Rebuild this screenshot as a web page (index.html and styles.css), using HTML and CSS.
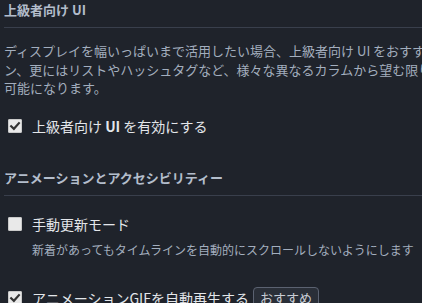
FILE: index.html
```html
<!DOCTYPE html>
<html lang="ja">
<head>
<meta charset="utf-8">
<link rel="stylesheet" href="styles.css">
</head>
<body>
<div class="page">
  <section class="group">
    <h4 class="group-title">上級者向け UI</h4>
    <p class="group-desc"><span class="line">ディスプレイを幅いっぱいまで活用したい場合、上級者向け UI をおすすめします。ホーム、通知、連合タイムライ</span><span class="line">ン、更にはリストやハッシュタグなど、様々な異なるカラムから望む限りの情報を一度に見たいように設定することが</span><span class="line">可能になります。</span></p>
    <label class="check-row">
      <span class="box checked"><svg viewBox="0 0 14 14" width="14" height="14"><path d="M3.2 7.2 L5.9 9.8 L10.9 4.2" fill="none" stroke="#333" stroke-width="2.2" stroke-linecap="square"/></svg></span>
      <span class="check-label">上級者向け <b>UI</b> を有効にする</span>
    </label>
  </section>
  <section class="group second">
    <h4 class="group-title">アニメーションとアクセシビリティー</h4>
    <label class="check-row first">
      <span class="box"></span>
      <span class="check-label">手動更新モード</span>
    </label>
    <p class="hint">新着があってもタイムラインを自動的にスクロールしないようにします</p>
    <label class="check-row third">
      <span class="box checked"><svg viewBox="0 0 14 14" width="14" height="14"><path d="M3.2 7.2 L5.9 9.8 L10.9 4.2" fill="none" stroke="#333" stroke-width="2.2" stroke-linecap="square"/></svg></span>
      <span class="check-label">アニメーションGIFを自動再生する</span>
      <span class="badge">おすすめ</span>
    </label>
  </section>
</div>
</body>
</html>
```
FILE: styles.css
```css
html, body {
  margin: 0;
  padding: 0;
  background: #1f232b;
  overflow: hidden;
}
body {
  font-family: "Noto Sans CJK JP", "Noto Sans", sans-serif;
  color: #a9b4c3;
  width: 422px;
  height: 303px;
}
.page {
  padding: 0 0 0 4px;
  width: 900px;
}
.group-title {
  margin: 0;
  padding: 1px 0 8px;
  font-size: 13px;
  line-height: 18px;
  font-weight: 700;
  color: #b3bdcb;
  border-bottom: 1px solid #393f4c;
  width: 418px;
}
.group-desc {
  margin: 14px 0 0;
  font-size: 13px;
  line-height: 18.5px;
  color: #a3aebe;
}
.line {
  display: block;
  white-space: nowrap;
}
.check-row {
  display: flex;
  align-items: center;
  height: 20px;
  margin-top: 18.5px;
  padding-left: 4px;
  font-size: 14px;
  color: #e3e6ea;
  white-space: nowrap;
}
.box {
  width: 14px;
  height: 14px;
  border-radius: 2px;
  background: #e9e9e9;
  box-shadow: inset 0 0 0 1px #c9c9c9;
  display: flex;
  flex: none;
}
.check-label {
  margin-left: 10px;
}
.check-label b {
  font-weight: 700;
}
.second {
  margin-top: 32px;
}
.check-row.first {
  margin-top: 18px;
}
.hint {
  margin: 8px 0 0 28px;
  font-size: 12px;
  line-height: 16px;
  color: #a3aebe;
  white-space: nowrap;
}
.check-row.third {
  margin-top: 30px;
}
.badge {
  margin-left: 4px;
  border: 1px solid #5b6271;
  border-radius: 4px;
  background: #2a2f38;
  color: #c9ced6;
  font-size: 13px;
  line-height: 20px;
  padding: 0 6px;
}
```
